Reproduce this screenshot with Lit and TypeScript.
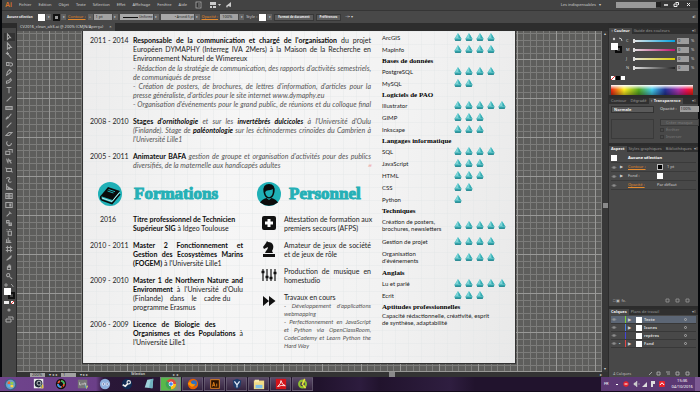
import { LitElement, html, svg, css, TemplateResult } from "lit";
import { customElement, property } from "lit/decorators.js";
import { classMap } from "lit/directives/class-map.js";

const boat = html`<svg class="boat" viewBox="0 0 8 8">
  <path d="M4 0 L7.400 5.600 H0.600 Z" fill="#4fc3c8" />
  <path d="M4 0 L4 5.600 H1.400 Z" fill="#7fd3d6" />
  <path d="M4.500 1 L7 5.200 H5 Z" fill="#35a8af" />
  <path d="M0.200 5.600 H7.800 L6.600 7.800 H1.200 Z" fill="#2fa3aa" />
  <path d="M1 7 H7 L6.600 7.800 H1.300 Z" fill="#1f7f88" />
</svg>`;

const toolPaths = [
  "M3 1 L3 8 L5 6 L7 6 Z",
  "M3 1 L3 9 L5 7 L8 7 Z M5 7 L6 9",
  "M4 4 L8 9 M1 3 H5 M3 1 V5 M2 2 L4 4",
  "M2 3 H5 V7 H2 Z M6 4 A2 2 0 1 1 6 7",
  "M2 9 L3 5 L6 2 L8 4 L5 7 Z",
  "M2 8 Q1 4 4 5 L7 2 L8 4 L5 7 Z",
  "M2 2 H8 M5 2 V9",
  "M2 8 L8 2",
  "M1 3 H9 V7 H1 Z M1 5 H9",
  "M8 1 L4 6 M4 6 L1 8 L3 5 Z",
  "M2 8 L8 2 M2 8 L4 7",
  "M1 7 L5 3 L9 3 L5 7 Z",
  "M3 3 A3 3 0 1 0 8 5",
  "M1 4 H6 V8 H1 Z M4 2 H9 V6",
  "M2 2 L4 8 M2 5 L8 4 M4 2 L8 8",
  "M2 3 H8 V7 H2 Z M1 2 V3 M9 7 V8",
  "M2 5 A2 2 0 1 1 6 5 A2 2 0 1 0 8 8",
  "M2 1 V8 H9 L2 4 M4 5 V8 M6 6 V8",
  "M1 2 H9 V8 H1 Z M1 5 H9 M4 2 V8 M6 2 V8",
  "M1 2 H9 V8 H1 Z M6 3 V7 M7 3 V7",
  "M2 8 L6 4 M5 2 L8 5",
  "M2 2 H5 V5 H2 Z M5 5 H8 V8 H5 Z M3 4 L7 7",
  "M4 4 H8 V9 H4 Z M5 2 H7 M2 2 H3 M2 4 H3",
  "M2 8 V4 M4 8 V2 M6 8 V5 M1 8 H8",
  "M3 1 V9 M7 1 V9 M1 3 H9 M1 7 H9",
  "M2 8 L8 2 L7 5 Z",
  "M3 4 V8 H7 V3 M4 3 V6 M6 2 V6 M5 2 V6",
  "M4 2 A2 2 0 1 1 4 6 A2 2 0 1 1 4 2 M6 6 L9 9",
];

@customElement("tool-strip")
export class ToolStrip extends LitElement {
  static styles = css`
    :host { display: flex; flex-direction: column; align-items: center; width: 15px; flex: none; background: #464646; border-right: 1px solid #2a2a2a; box-sizing: border-box; }
    .top { height: 5px; align-self: stretch; background: #2b2b2b; margin-bottom: 5px; }
    .tools { display: flex; flex-direction: column; justify-content: space-between; height: 247px; }
    button { all: unset; display: flex; width: 11px; height: 8px; align-items: center; justify-content: center; }
    button.on { background: #333; }
    svg { width: 8px; height: 8px; display: block; }
    .sw { width: 11px; height: 24px; margin-top: 3px; }
    .modes { width: 10px; height: 20px; }
  `;
  render() {
    return html`
      <div class="top"></div>
      <div class="tools">
        ${toolPaths.map(
          (d, i) => html`<button class=${classMap({ on: i === 0 })} aria-label="Outil">
            <svg viewBox="0 0 10 10"><path d=${d} fill="none" stroke="#a6a6a6" stroke-width="1.3" /></svg>
          </button>`
        )}
      </div>
      <svg class="sw" viewBox="0 0 11 24">
        <path d="M1 1 H3 V3 H1 Z M7 1 L9 3 M9 3 V4" stroke="#bbb" fill="none" stroke-width=".7" />
        <rect x="5" y="10" width="5" height="5" fill="none" stroke="#111" stroke-width="2" />
        <rect x="0" y="5" width="7" height="7" fill="#fff" />
        <rect x="0" y="18" width="5" height="3" fill="#eee" /><rect x="7" y="18" width="3" height="3" fill="#fff" />
        <path d="M7 21 L10 18" stroke="#e33" />
      </svg>
      <svg class="modes" viewBox="0 0 10 20">
        <circle cx="5" cy="3" r="1.6" fill="#999" /><path d="M2 12 H7 V15 H2 Z M4 10 H9 V13" fill="none" stroke="#aaa" />
      </svg>`;
  }
}

type Skill = [string | TemplateResult, number, boolean?];
const skills: { title: string; rows: Skill[] }[] = [
  { title: "", rows: [["ArcGIS", 4], ["MapInfo", 4]] },
  { title: "Bases de données", rows: [["PostgreSQL", 4], ["MySQL", 2]] },
  { title: "Logiciels de PAO", rows: [["Illustrator", 5], ["GIMP", 3], ["Inkscape", 3]] },
  { title: "Langages informatique", rows: [["SQL", 4], ["JavaScript", 3], ["HTML", 3], ["CSS", 2], ["Python", 1]] },
  {
    title: "Techniques",
    rows: [
      [html`Création de posters,<br />brochures, newsletters`, 5, true],
      ["Gestion de projet", 4],
      [html`Organisation<br />d'événements`, 4, true],
    ],
  },
  { title: "Anglais", rows: [["Lu et parlé", 5], ["Ecrit", 3]] },
];

/* [justified, content] per line */
type Line = [boolean, TemplateResult | string];
const lines = (ls: Line[]) => ls.map(([j, t]) => html`<span class=${classMap({ ln: true, j })}>${t}</span>`);

const education: { date: string; text: Line[] }[] = [
  { date: "2016", text: [[false, html`<b>Titre professionnel de Technicien</b>`], [false, html`<b>Supérieur SIG</b> à Idgeo Toulouse`]] },
  {
    date: "2010 - 2011",
    text: [[true, html`<b>Master 2 Fonctionnement et</b>`], [true, html`<b>Gestion des Ecosystèmes Marins</b>`], [false, html`<b>(FOGEM)</b> à l'Université Lille1`]],
  },
  {
    date: "2009 - 2010",
    text: [[true, html`<b>Master 1 de Northern Nature and</b>`], [true, html`<b>Environment</b> à l'Université d'Oulu`], [false, html`(Finlande) &nbsp; &nbsp;dans &nbsp; &nbsp;le &nbsp; &nbsp;cadre du`], [false, "programme Erasmus"]],
  },
  {
    date: "2006 - 2009",
    text: [[false, html`<b>Licence &nbsp; de &nbsp; Biologie &nbsp; des</b>`], [true, html`<b>Organismes et des Populations</b> à`], [false, "l'Université Lille1"]],
  },
];

const plus = svg`<rect x="1" y="1" width="14" height="14" rx="2" fill="#111"/><path d="M8 4 V12 M4 8 H12" stroke="#fff" stroke-width="3"/>`;
const knight = svg`<path d="M2 16 H14 V13 H2 Z M4 12 H12 L11 10 Q13 7 12 4 Q11 1 7 1 L6 0 L5 2 L2 6 L3 8 L7 6 Q7 8 5 10 Z" fill="#111"/>`;
const faders = svg`<path d="M2 2 V14 M6 2 V14 M10 2 V14 M14 2 V14" stroke="#111" stroke-width="1.200"/><path d="M0.5 5 H3.5 M4.5 10 H7.5 M8.5 11 H11.5 M12.5 6 H15.5" stroke="#111" stroke-width="2.4"/>`;
const forward = svg`<path d="M2 3 L8 8 L2 13 Z M8 3 L14.500 8 L8 13 Z" fill="#111"/>`;

@customElement("cv-page")
export class CvPage extends LitElement {
  static styles = css`
    :host {
      display: grid; grid-template-columns: minmax(0, 1fr) 133px; column-gap: 11px; box-sizing: border-box;
      padding: 0 0 5px 7px; color: #1c1c1c; overflow: hidden;
      font: 7px/9px "Lato", "Noto Sans", sans-serif;
      background-image: linear-gradient(#e3e6e866 1px, transparent 1px), linear-gradient(90deg, #e3e6e866 1px, transparent 1px), linear-gradient(100deg, #ececec, #f6f6f6 35%, #f2f2f2 70%, #e9e9e9);
      background-size: 13px 13px, 13px 13px, 100% 100%;
    }
    p, h2, h3 { margin: 0; }
    b { color: #0c0c0c; }
    .main { padding-top: 5px; }
    .row { display: grid; grid-template-columns: 36px minmax(0, 1fr); column-gap: 7px; margin-bottom: 8px; }
    .date { text-align: center; white-space: nowrap; }
    .ln { display: block; white-space: nowrap; }
    .j { text-align: justify; text-align-last: justify; }
    .it { font-style: italic; color: #555; }
    .up { font-style: normal; }
    .desc { padding-top: 1px; }
    .mark { color: #e99; float: right; font-size: 4px; }
    .two { display: grid; grid-template-columns: 153px minmax(0, 1fr); column-gap: 14px; padding-top: 4px; }
    .head { display: grid; align-items: center; height: 24px; margin-bottom: 9px; }
    .head svg { width: 24px; height: 24px; }
    .edu .head { grid-template-columns: 36px auto; padding-left: 8px; }
    .pers .head { grid-template-columns: 32px auto; }
    h2 { font: bold 17px/24px "Liberation Serif", serif; color: #25b0b6; -webkit-text-stroke: 1px #25b0b6; }
    .prow { display: grid; grid-template-columns: 16px minmax(0, 1fr); column-gap: 7px; margin: 0 0 8px 4px; }
    .prow svg { width: 16px; height: 16px; }
    .small { font-size: 6px; line-height: 8px; }
    .skills { font-size: 6px; line-height: 7px; }
    h3 { font: bold 7px/12px "Liberation Serif", serif; height: 10px; color: #000; }
    .skill { display: grid; grid-template-columns: 72px auto; align-items: center; height: 12px; white-space: nowrap; }
    .skill.tall { height: 20px; }
    .boats { display: flex; gap: 3px; }
    .boat { width: 8px; height: 8px; }
    .apt { padding-top: 1px; white-space: nowrap; }
  `;
  render() {
    return html`
      <section class="main">
        <div class="row">
          <span class="date">2011 - 2014</span>
          <div>
            ${lines([
              [true, html`<b>Responsable de la communication et chargé de l'organisation</b> du projet`],
              [true, "Européen DYMAPHY (Interreg IVA 2Mers) à la Maison de la Recherche en"],
              [false, "Environnement Naturel de Wimereux"],
            ])}
            <div class="it desc">
              ${lines([
                [true, "- Rédaction de la stratégie de communication, des rapports d'activités semestriels,"],
                [false, "de communiqués de presse"],
                [true, "- Création de posters, de brochures, de lettres d'information, d'articles pour la"],
                [false, "presse généraliste, d'articles pour le site internet www.dymaphy.eu"],
                [true, "- Organisation d'événements pour le grand public, de réunions et du colloque final"],
              ])}
            </div>
          </div>
        </div>
        <div class="row">
          <span class="date">2008 - 2010</span>
          <div class="it">
            ${lines([
              [true, html`<b class="up">Stages</b> <b>d'ornithologie</b> et sur les <b>invertébrés dulcicoles</b> à l'Université d'Oulu`],
              [true, html`(Finlande). Stage de <b>paléontologie</b> sur les échinodermes crinoïdes du Cambrien à`],
              [false, "l'Université Lille1"],
            ])}
          </div>
        </div>
        <div class="row">
          <span class="date">2005 - 2011</span>
          <div class="it">
            ${lines([
              [true, html`<b class="up">Animateur BAFA</b> gestion de groupe et organisation d'activités pour des publics`],
              [false, html`diversifiés, de la maternelle aux handicapés adultes<span class="mark">⊞</span>`],
            ])}
          </div>
        </div>
        <div class="two">
          <section class="edu">
            <div class="head">
              <svg viewBox="0 0 24 24">
                <circle cx="12" cy="12" r="12" fill="#1fb0b6" />
                <path d="M2.500 14 L10 5 L22 9 L14.500 18 Z" fill="#0b0b0b" />
                <path d="M3 14 Q2 17 4 18 L14 21.500 L22 12" fill="none" stroke="#0b0b0b" stroke-width="1.500" />
                <path d="M4 16 L14 19.500 L21.500 10.500" fill="none" stroke="#bfe6e8" stroke-width="1" />
                <path d="M10.500 7.500 L17 9.700 M9.500 9 L15.500 11" stroke="#1fb0b6" />
              </svg>
              <h2>Formations</h2>
            </div>
            ${education.map((e) => html`<div class="row"><span class="date">${e.date}</span><div>${lines(e.text)}</div></div>`)}
          </section>
          <section class="pers">
            <div class="head">
              <svg viewBox="0 0 24 24">
                <circle cx="12" cy="12" r="12" fill="#1fb0b6" />
                <path d="M3 20.500 Q5 17 9.500 16 L12 18 L14.500 16 Q19 17 21 20.500 Q12 27 3 20.500 Z" fill="#0b0b0b" />
                <path d="M6.500 10 Q5.500 2 12 2 Q18.500 2 17.500 10 Q16.500 16 12 16.500 Q7.500 16 6.500 10 Z" fill="#0b0b0b" />
                <path d="M8.200 10 Q9 8 12 8.200 Q15 8 15.800 7 V10.500 Q15 14.800 12 15.200 Q9 14.800 8.200 10.500 Z" fill="#1fb0b6" />
              </svg>
              <h2>Personnel</h2>
            </div>
            <div class="prow">
              <svg viewBox="0 0 16 16">${plus}</svg>
              <div>${lines([[true, "Attestation de formation aux"], [false, "premiers secours (AFPS)"]])}</div>
            </div>
            <div class="prow">
              <svg viewBox="0 0 16 16">${knight}</svg>
              <div>${lines([[true, "Amateur de jeux de société"], [false, "et de jeux de rôle"]])}</div>
            </div>
            <div class="prow">
              <svg viewBox="0 0 16 16">${faders}</svg>
              <div>${lines([[true, "Production de musique en"], [false, "homestudio"]])}</div>
            </div>
            <div class="prow">
              <svg viewBox="0 0 16 16">${forward}</svg>
              <div>
                ${lines([[false, "Travaux en cours"]])}
                <div class="it small">
                  ${lines([
                    [true, "- Développement d'applications"],
                    [false, "webmapping"],
                    [true, "- Perfectionnement en JavaScript"],
                    [true, "et Python via OpenClassRoom,"],
                    [true, "CodeCademy et Learn Python the"],
                    [false, "Hard Way"],
                  ])}
                </div>
              </div>
            </div>
          </section>
        </div>
      </section>
      <section class="skills">
        ${skills.map(
          (g) => html`${g.title ? html`<h3>${g.title}</h3>` : ""}
          ${g.rows.map(
            ([name, n, tall]) => html`<div class=${classMap({ skill: true, tall: !!tall })}>
              <span>${name}</span><span class="boats">${Array.from({ length: n }, () => boat)}</span>
            </div>`
          )}`
        )}
        <h3>Aptitudes professionnelles</h3>
        <p class="apt">Capacité rédactionnelle, créativité, esprit<br />de synthèse, adaptabilité</p>
      </section>`;
  }
}

const eye = html`<svg class="eye" viewBox="0 0 8 6"><path d="M1 3 Q4 0 7 3 Q4 6 1 3 Z" fill="none" stroke="#999" stroke-width=".8" /><circle cx="4" cy="3" r="1" fill="#aaa" /></svg>`;

@customElement("side-panels")
export class SidePanels extends LitElement {
  static styles = css`
    :host { display: flex; flex-direction: column; width: 90px; flex: none; background: #2c2c2c; color: #d0d0d0; font: 4px/6px "Noto Sans", sans-serif; box-sizing: border-box; padding: 5px 0 0 1px; }
    .tabs { display: flex; height: 6px; background: #303030; white-space: nowrap; }
    .tabs button { all: unset; padding: 0 2px; color: #9a9a9a; }
    .tabs button.on { background: #484848; color: #eee; font-weight: bold; }
    .menu { margin-left: auto; padding-right: 2px; color: #aaa; }
    .panel { background: #484848; margin-bottom: 3px; }
    .color { height: 61px; display: flex; flex-direction: column; }
    .mix { display: grid; grid-template-columns: 15px 1fr; height: 46px; padding: 2px 3px 0 2px; }
    .chips { width: 14px; height: 46px; }
    .sl { display: grid; grid-template-columns: 5px 1fr 12px 4px; column-gap: 2px; align-items: center; height: 9px; }
    .sl input[type="range"] { appearance: none; width: 100%; height: 2px; margin: 0; background: linear-gradient(90deg, #e8e8e8, var(--ink)); }
    input[type="range"]::-webkit-slider-thumb { appearance: none; width: 2px; height: 4px; background: #ddd; }
    .num { box-sizing: border-box; width: 12px; height: 6px; border: 0; padding: 0 1px; background: #9d9d9d; color: #222; font: 4px/6px "Noto Sans", sans-serif; }
    .spec { margin: 3px 5px 0 2px; height: 11px; background: linear-gradient(#fff, transparent 45%, #0005), linear-gradient(90deg, #e21, #fe2 16%, #5a2 34%, #4ce 50%, #239 66%, #a3a 82%, #e15 92%, #e21); }
    .trans { height: 39px; display: grid; grid-template-columns: 43px 1fr; grid-template-rows: 8px 20px; gap: 5px 6px; padding: 2px 4px 0 2px; box-sizing: border-box; align-items: start; }
    select { appearance: none; border: 1px solid #333; background: #5a5a5a; color: #eee; font: bold 4px/5px "Noto Sans", sans-serif; padding: 0 2px; height: 7px; width: 100%; }
    .op { display: flex; gap: 3px; color: #ddd; white-space: nowrap; }
    .op .num { width: 19px; }
    .prev { border: 1px solid #3a3a3a; height: 18px; }
    .mask { display: flex; flex-direction: column; gap: 1px; color: #7c7c7c; }
    .mask button { all: unset; text-align: center; background: #505050; border: 1px solid #3a3a3a; line-height: 5px; }
    .mask label { display: flex; gap: 2px; align-items: center; }
    .mask input { appearance: none; width: 4px; height: 4px; margin: 0; border: 1px solid #383838; }
    .aspect { height: 154px; display: flex; flex-direction: column; padding: 2px; box-sizing: border-box; }
    .a { display: grid; grid-template-columns: 9px 8px 29px 10px 1fr; align-items: center; height: 9px; border-bottom: 1px solid #3a3a3a; box-sizing: border-box; white-space: nowrap; }
    .a.first { grid-template-columns: 17px 1fr; font-weight: bold; color: #fff; }
    .sq { width: 6px; height: 6px; background: #fff; }
    .sq.k { background: #000; border: 1px solid #bbb; box-sizing: border-box; }
    .o { color: #e58a2c; text-decoration: underline; }
    .eye { width: 6px; height: 5px; }
    .foot { display: flex; justify-content: space-between; align-items: center; height: 7px; margin-top: auto; padding: 0 6px 0 2px; color: #bbb; }
    .foot svg { width: 46px; height: 5px; }
    .layers { flex: 1; display: flex; flex-direction: column; margin: 0; padding: 1px 2px 0; }
    .l { display: grid; grid-template-columns: 8px 6px 3px 8px 8px 1fr 12px; align-items: center; height: 8px; box-sizing: border-box; border-bottom: 1px solid #383838; white-space: nowrap; font-weight: bold; line-height: 7px; }
    .l.on { background: #5c6675; }
    .bar { width: 1px; height: 7px; background: var(--c); }
    .ring { width: 3px; height: 3px; border: 1px solid #aaa; border-radius: 50%; box-sizing: border-box; }
  `;
  render() {
    const inks: [string, string][] = [["C", "#00a0e0"], ["M", "#c0106a"], ["J", "#d8cc00"], ["N", "#222222"]];
    const layers: [string, string][] = [["Texte", "#7bd13b"], ["Icones", "#4a7de0"], ["repères", "#4242d8"], ["Fond", "#e04848"]];
    return html`
      <div class="tabs"><button class="on">↕ Couleur</button><button>Guide des couleurs</button><span class="menu">▾≡</span></div>
      <div class="panel color">
        <div class="mix">
          <svg class="chips" viewBox="0 0 14 46">
            <circle cx="3" cy="3" r="1.200" fill="#ccc" /><path d="M8 2 Q11 2 11 5" fill="none" stroke="#ccc" />
            <rect x="5" y="11" width="5" height="5" fill="none" stroke="#0a0a0a" stroke-width="2" />
            <rect x="0" y="7" width="7" height="7" fill="#fff" />
            <rect x="0" y="40" width="4" height="4" fill="#fff" /><path d="M0 44 L4 40" stroke="#e33" />
            <rect x="5" y="40" width="4" height="4" fill="#000" /><rect x="10" y="40" width="4" height="4" fill="#fff" />
          </svg>
          <div>
            ${inks.map(
              ([n, c]) => html`<label class="sl"><span>${n}</span><input type="range" value="0" style="--ink:${c}" /><input class="num" value="0" aria-label=${n} /><span>%</span></label>`
            )}
          </div>
        </div>
        <div class="spec"></div>
      </div>
      <div class="tabs"><button>Contour</button><button>Dégradé</button><button class="on">↕ Transparence</button><span class="menu">▾≡</span></div>
      <div class="panel trans">
        <select aria-label="Mode"><option>Normale</option></select>
        <label class="op">Opacité : <input class="num" value="100%" /></label>
        <div class="prev"></div>
        <div class="mask"><button>Créer masque</button><label><input type="checkbox" />Écrêter</label><label><input type="checkbox" />Inverser</label></div>
      </div>
      <div class="tabs"><button class="on">Aspect</button><button>Styles graphiques</button><button>Bibliothèques</button><span class="menu">▾≡</span></div>
      <div class="panel aspect">
        <div class="a first"><span class="sq"></span><span>Aucune sélection</span></div>
        <div class="a">${eye}<span>▶</span><span class="o">Contour :</span><span class="sq k"></span><span>1 pt</span></div>
        <div class="a">${eye}<span>▶</span><span>Fond :</span><span class="sq"></span><span></span></div>
        <div class="a">${eye}<span></span><span class="o">Opacité :</span><span>Par défaut</span></div>
        <div class="foot">
          <span>□ ▣ fx.</span>
          <svg viewBox="0 0 46 5"><path d="M22 1 H25 V4 H22 Z M32 1 H35 V4 H32 Z M42 1 H45 V4 H42 Z" fill="none" stroke="#999" stroke-width=".8" /></svg>
        </div>
      </div>
      <div class="tabs"><button class="on">Calques</button><button>Plans de travail</button><span class="menu">▾≡</span></div>
      <div class="panel layers">
        ${layers.map(
          ([n, c], i) => html`<div class=${classMap({ l: true, on: i === 0 })}>
            ${eye}<span>${i === 3 ? "▪" : ""}</span><span class="bar" style="--c:${c}"></span><span>${i === 2 ? "" : "▶"}</span><span class="sq"></span><span>${n}</span><span class="ring"></span>
          </div>`
        )}
        <div class="foot">
          <span>4 Calques</span>
          <svg viewBox="0 0 46 5"><path d="M5 4 L8 1 M13 1 H16 V4 H13 Z M22 1 H26 M23 3 H26 M32 1 H35 V4 H32 Z M42 1 H45 V4 H42 Z" fill="none" stroke="#aaa" stroke-width=".9" /></svg>
        </div>
      </div>`;
  }
}

const taskIcons: { tile?: boolean; green?: boolean; art: TemplateResult | unknown }[] = [
  { art: svg`<circle cx="7" cy="7" r="6.500" fill="#3e5f86"/><circle cx="7" cy="7" r="5" fill="#6f9cc4"/><path d="M4 4 L6.500 3.500 V6.500 H4 Z" fill="#f0652e"/><path d="M7 4 L10 4.500 V7 H7 Z" fill="#8fd04a"/><path d="M4 7 H6.500 V10 L4 9.500 Z" fill="#4fb4f0"/><path d="M7 7.500 H10 V10 H7 Z" fill="#ffd53c"/>` },
  { art: svg`<rect x="1" y="1" width="11" height="11" fill="#eee"/><circle cx="6.500" cy="6.500" r="4.500" fill="#1d2735"/><circle cx="7" cy="6" r="2.300" fill="none" stroke="#ddd"/><path d="M8 8 H12 V12 H9 Z" fill="#e5c33a"/><path d="M8 8 H10 V12 Z" fill="#3670c0"/>` },
  { art: svg`<circle cx="7" cy="7" r="6" fill="#111"/><circle cx="7" cy="7" r="3.500" fill="none" stroke="#e53" stroke-width="2" stroke-dasharray="3 1"/><path d="M7 3.500 A3.500 3.500 0 0 1 10.500 7" fill="none" stroke="#3b6" stroke-width="2"/><path d="M7 10.500 A3.500 3.500 0 0 1 3.500 7" fill="none" stroke="#39e" stroke-width="2"/>` },
  { art: svg`<rect x="1" y="2" width="11" height="10" fill="#777"/><path d="M3 5 V8 H5 M6 6 V8 M8 8 V6 H10 V9" fill="none" stroke="#ddd" stroke-width=".8"/><path d="M9 9 H13 L11 13 Z" fill="#4aa0d8"/><path d="M11 9 H13 L11 13 Z" fill="#ecd040"/>` },
  { art: svg`<circle cx="7" cy="7" r="6" fill="#8fb0dd"/><circle cx="5" cy="7" r="1.800" fill="#eef"/><circle cx="9.500" cy="7" r="1.800" fill="#eef"/><circle cx="5" cy="7" r=".8" fill="#347"/><circle cx="9.500" cy="7" r=".8" fill="#347"/>` },
  { art: svg`<circle cx="7" cy="7" r="6" fill="#102a52"/><circle cx="9" cy="5" r="2" fill="none" stroke="#eee" stroke-width="1.300"/><path d="M2 8 L5 9.500 L8 6.500" fill="none" stroke="#eee" stroke-width="2"/>` },
  { art: svg`<path d="M5 2 L12 1 L11 12 L2 11 Z" fill="#9fd2dc"/><path d="M9 1.500 L12 1 L11 12 L7 11.600 Z" fill="#6fb0be"/>` },
  { tile: true, green: true, art: svg`<circle cx="7" cy="7" r="6" fill="#dd4b3e"/><path d="M7 7 L2 3.500 A6 6 0 0 0 7 13 Z" fill="#3aa757"/><path d="M7 7 H13 A6 6 0 0 1 7 13 Z" fill="#fbc116"/><circle cx="7" cy="7" r="2.800" fill="#fff"/><circle cx="7" cy="7" r="2.100" fill="#4285f4"/>` },
  { tile: true, art: svg`<circle cx="7" cy="7" r="6" fill="#e66000"/><circle cx="8" cy="6" r="3.500" fill="#2f6fc0"/><path d="M1 7 Q3 3 5 6 Q7 8 10 7 Q8 11 5 10" fill="#ff9500"/>` },
  { tile: true, art: svg`<rect x="2" y="2" width="10" height="10" fill="#2a1200" stroke="#f08a1c"/><path d="M4 10 L5.500 5 L7 10 M4.500 8.500 H6.500 M9 6.500 V10" stroke="#f08a1c" fill="none"/>` },
  { tile: true, art: svg`<path d="M2 3 L7 1 L12 3 L11 10 L7 13 L3 10 Z" fill="#1d3c6b"/><path d="M4 4 L7 8 L10 4 M7 8 V11" fill="none" stroke="#dfe8f5" stroke-width="1.500"/>` },
  { tile: true, art: svg`<rect x="1" y="3" width="12" height="10" fill="#f2db86"/><rect x="2" y="2" width="5" height="3" fill="#f7e9ae"/><rect x="3" y="8" width="8" height="4" fill="#7fc0e8"/>` },
  { tile: true, art: svg`<rect x="1" y="1" width="12" height="12" fill="#d3131a"/><path d="M3 10 Q7 7 7 3 Q8 8 12 9 Q7 8 3 10" fill="none" stroke="#fff"/>` },
  { tile: true, art: svg`<circle cx="6.500" cy="7" r="4" fill="none" stroke="#8fc030" stroke-width="2.500"/><path d="M9 1 L6 8 M7 8 L10 12" stroke="#e8e040" stroke-width="1.800"/>` },
];

@customElement("task-bar")
export class TaskBar extends LitElement {
  static styles = css`
    :host { display: flex; align-items: center; height: 15px; box-sizing: border-box; background: linear-gradient(90deg, #6f448c 0, #6b3f88 96px, #2a1738 104px, #21132d 320px, #2d1c3e 360px, #21132d 380px, #2f1e40 450px, #21132d 475px); border-bottom: 1px solid #120a1a; color: #fff; font: 4px/6px "Noto Sans", sans-serif; }
    button { all: unset; width: 21px; margin-right: 1px; height: 14px; box-sizing: border-box; display: flex; justify-content: center; align-items: center; flex: none; }
    .start { width: 20px; margin-right: 8px; }
    .tile { border: 1px solid #77708088; background: linear-gradient(#5a4a68, #35243f); }
    .green { background: linear-gradient(90deg, #58b84c 50%, #8a7a90); }
    svg { width: 12px; height: 12px; }
    .start svg { width: 13px; height: 13px; }
    .tray { margin-left: auto; height: 100%; width: 99px; display: flex; align-items: center; background: #5b3873; box-sizing: border-box; padding-left: 3px; }
    .tray svg { width: 60px; height: 8px; margin-left: 3px; }
    .clock { text-align: center; }
    .show { width: 5px; height: 100%; background: #7d5a94; margin-left: auto; }
  `;
  render() {
    return html`${taskIcons.map(
        (t, i) => html`<button class=${classMap({ start: i === 0, tile: !!t.tile, green: !!t.green })} aria-label="Application"><svg viewBox="0 0 14 14">${t.art}</svg></button>`
      )}
      <div class="tray">
        <span>FR</span>
        <svg viewBox="0 0 60 8">
          <path d="M4 5 L5 4 L6 5" stroke="#fff" fill="none" /><circle cx="14" cy="4" r="2.700" fill="#e8222c" /><path d="M12.500 4 H15.500" stroke="#fff" />
          <path d="M22 3 H23 L25 1 V7 L23 5 H22 Z M27 3 V5" fill="#ccc" stroke="#ccc" stroke-width=".5" />
          <path d="M30 7 L35 2 V7 Z" fill="#ddd" /><path d="M39 1 H43 V4 H41 V7 H39 Z" fill="#ddd" />
          <rect x="47" y="1" width="6" height="6" rx="1" fill="#e8222c" /><path d="M48 5 Q50 1 52 5" stroke="#fff" fill="none" />
        </svg>
        <span class="clock">15:36<br />04/10/2016</span><span class="show"></span>
      </div>`;
  }
}

@customElement("app-root")
export class AppRoot extends LitElement {
  static styles = css`
    :host { display: block; background: #fff; font: 4px/6px "Noto Sans", sans-serif; color: #cfcfcf; }
    .app { display: flex; flex-direction: column; background: #424242; border: solid #05070a; border-width: 0 2px; }
    .menus, .ctrl { display: flex; align-items: center; white-space: nowrap; background: #434343; }
    .menus { height: 10px; padding-left: 3px; }
    .menus button { all: unset; margin-right: 7px; }
    .logo { color: #d0722e; font: bold 7px/10px "Liberation Sans", sans-serif; width: 14px; }
    .marks { width: 48px; height: 8px; }
    .right { margin-left: auto; display: flex; align-items: center; gap: 8px; }
    .search { width: 40px; height: 6px; box-sizing: border-box; border: 0; background: #999; padding: 0; }
    .win { width: 42px; height: 9px; margin-left: -8px; }
    .ctrl { height: 13px; padding-left: 5px; border-top: 1px solid #353535; box-sizing: border-box; background: #484848; gap: 2px; }
    .none { width: 29px; font-weight: bold; font-size: 3px; color: #eee; }
    .chip { display: flex; height: 7px; gap: 1px; align-items: center; }
    .chip i { width: 7px; height: 7px; background: #fff; }
    .chip i.k { background: #999; border: 2px solid #111; box-sizing: border-box; }
    .arr { background: #626262; width: 5px; height: 6px; text-align: center; font-size: 3px; color: #eee; }
    .o { color: #e58a2c; text-decoration: underline; }
    .f { box-sizing: border-box; height: 6px; border: 0; padding: 0 2px; background: #a2a2a2; color: #222; font: 4px/6px "Noto Sans", sans-serif; width: 18px; }
    .line { width: 33px; height: 6px; background: #a8a8a8; color: #222; display: flex; align-items: center; gap: 1px; font-size: 3px; justify-content: flex-end; }
    .line b { width: 15px; height: 1px; background: #111; }
    .btn { all: unset; background: #5c5c5c; border: 1px solid #383838; height: 5px; line-height: 5px; padding: 0 3px; font-weight: bold; font-size: 3px; color: #eee; }
    .body { display: flex; }
    .doc { flex: 1; display: flex; flex-direction: column; min-width: 0; }
    .tab { height: 8px; background: #2d2d2d; display: flex; }
    .tab button { all: unset; background: #484848; padding: 1px 3px; line-height: 6px; color: #ddd; }
    .tab .x { margin-left: 6px; }
    .mid { flex: 1; display: flex; }
    .canvas {
      flex: 1; min-width: 0; display: flex; box-sizing: border-box; padding: 0 86px 8px 65px;
      background-color: #5e5e5c;
      background-image: linear-gradient(transparent 28px, #999997 28px, #999997 29px, transparent 29px), linear-gradient(90deg, transparent 32px, #999997 32px, #999997 33px, transparent 33px),
        linear-gradient(transparent 2px, #7c7c7a 2px, #7c7c7a 3px, transparent 3px, transparent 9px, #7c7c7a 9px, #7c7c7a 10px, transparent 10px),
        linear-gradient(90deg, transparent 6px, #7c7c7a 6px, #7c7c7a 7px, transparent 7px, transparent 12px, #7c7c7a 12px);
      background-size: 39px 39px, 39px 39px, 13px 13px, 13px 13px;
    }
    cv-page { flex: 1; min-width: 0; border: 0 solid #333; border-width: 0 1px 1px; }
    .vs { width: 6px; background: #383838; display: flex; flex-direction: column; align-items: center; font-size: 4px; }
    .vs i { width: 5px; height: 5px; background: #8a8a8a; margin-top: 166px; }
    .vs span:last-child { margin-top: auto; }
    .status { height: 5px; background: #333; display: flex; align-items: center; line-height: 5px; gap: 4px; padding-left: 13px; }
    .status .f { height: 4px; width: 15px; line-height: 4px; }
    .status .s { margin-left: 39px; font-weight: bold; font-size: 3px; width: 38px; }
    .status i { width: 6px; height: 5px; background: #8a8a8a; margin-left: 207px; }
    .status .e { margin-left: auto; margin-right: 6px; }
  `;
  @property() file = "CV2016_clean_alt3.ai @ 200% (CMJN/Aperçu)";
  render() {
    const names = ["Fichier", "Edition", "Objet", "Texte", "Sélection", "Effet", "Affichage", "Fenêtre", "Aide"];
    const arr = html`<span class="arr">▾</span>`;
    return html`
      <div class="app">
        <nav class="menus">
          <span class="logo">Ai</span>${names.map((n) => html`<button>${n}</button>`)}
          <svg class="marks" viewBox="0 0 48 8">
            <rect x="2" y="1" width="5" height="6" fill="#333" stroke="#bbb" stroke-width=".7" /><path d="M4 3 H6 M4 5 H6" stroke="#ccc" stroke-width=".6" />
            <path d="M16 1 H22 V4 H16 Z M16 5 H18 V7 H16 Z M19 5 H22 V7 H19 Z" fill="#ccc" /><path d="M24 3 H27 L25.500 5 Z" fill="#ccc" />
            <path d="M32 5 L37 1 L37 6 L34 5 L33 7 Z" fill="#ccc" />
          </svg>
          <span class="right">
            <button>Les indispensables &nbsp; ▾</button><input class="search" aria-label="Rechercher" />
            <svg class="win" viewBox="0 0 42 9">
              <rect x="4" y="0" width="38" height="7" fill="#353535" /><rect x="0" y="1" width="5" height="5" fill="#222" />
              <path d="M8 4 H12" stroke="#eee" stroke-width="1.500" /><path d="M18 3 H21 V5.500 H18 Z M19.500 1.500 H22.500 V4" fill="none" stroke="#eee" /><path d="M31 2 L34 5 M34 2 L31 5" stroke="#eee" />
            </svg>
          </span>
        </nav>
        <div class="ctrl">
          <span class="none">Aucune sélection</span>
          <span class="chip"><i></i>${arr}</span><span class="chip"><i class="k"></i>${arr}</span>
          <span class="o">Contour :</span><span class="chip"><span class="arr">↕</span><input class="f" value="1 pt" aria-label="Contour" />${arr}</span>
          <span class="chip"><span class="line"><b></b>Uniforme</span>${arr}</span>
          <span class="chip"><span class="line">• Arrondi 5 pt</span>${arr}</span>
          <span class="o">Opacité :</span><span class="chip"><input class="f" value="100%" aria-label="Opacité" />${arr}</span>
          <span>Style :</span><span class="chip"><i></i>${arr}</span>
          <button class="btn">Format de document</button><button class="btn">Préférences</button><span>&nbsp; ⊣▪ ▾</span>
          <span class="right">◂≡ &nbsp;</span>
        </div>
        <div class="body">
          <tool-strip></tool-strip>
          <div class="doc">
            <div class="tab"><button>${this.file}<span class="x">×</span></button></div>
            <div class="mid">
              <div class="canvas"><cv-page></cv-page></div>
              <div class="vs"><span>▴</span><i></i><span>▾</span></div>
            </div>
            <div class="status"><input class="f" value="200%" aria-label="Zoom" /><span>▾ ◂ ◂</span><input class="f" value="1" aria-label="Plan" /><span>▾ ▸ ▸</span><span class="s">Sélection</span><span>▸ ◂</span><i></i><span class="e">▸</span></div>
          </div>
          <side-panels></side-panels>
        </div>
      </div>
      <task-bar></task-bar>`;
  }
}
